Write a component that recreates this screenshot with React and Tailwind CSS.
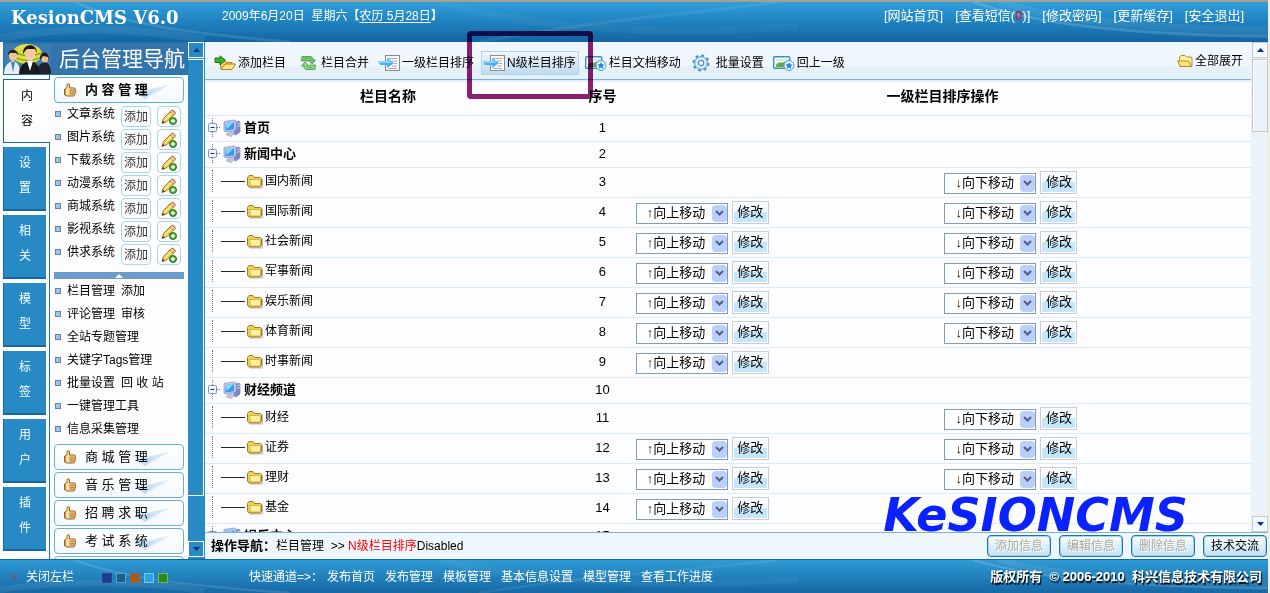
import { useState } from "react"
import clsx from "clsx"

const TABS = ["内容", "设置", "相关", "模型", "标签", "用户", "插件"]

const SYSTEMS = ["文章系统", "图片系统", "下载系统", "动漫系统", "商城系统", "影视系统", "供求系统"]

const MANAGE_LINKS = [
  ["栏目管理", "添加"],
  ["评论管理", "审核"],
  ["全站专题管理"],
  ["关键字Tags管理"],
  ["批量设置", "回 收 站"],
  ["一键管理工具"],
  ["信息采集管理"],
]

const SECTIONS = ["商 城 管 理", "音 乐 管 理", "招 聘 求 职", "考 试 系 统", "采 集 管 理"]

const ROWS = [
  { id: 1, name: "首页", root: true },
  { id: 2, name: "新闻中心", root: true },
  { id: 3, name: "国内新闻", down: true },
  { id: 4, name: "国际新闻", up: true, down: true },
  { id: 5, name: "社会新闻", up: true, down: true },
  { id: 6, name: "军事新闻", up: true, down: true },
  { id: 7, name: "娱乐新闻", up: true, down: true },
  { id: 8, name: "体育新闻", up: true, down: true },
  { id: 9, name: "时事新闻", up: true },
  { id: 10, name: "财经频道", root: true },
  { id: 11, name: "财经", down: true },
  { id: 12, name: "证券", up: true, down: true },
  { id: 13, name: "理财", up: true, down: true },
  { id: 14, name: "基金", up: true },
  { id: 15, name: "娱乐中心", root: true },
]

const SKINS = [
  { name: "深蓝", className: "bg-[#1c3a8e] border-[#3b3f9c]" },
  { name: "青蓝", className: "bg-[#1b6187] border-[#4fa3c8]" },
  { name: "棕色", className: "bg-[#a85a14] border-[#8a6a52]" },
  { name: "天蓝", className: "bg-[#2aa3e6] border-[#7cc8ee]" },
  { name: "绿色", className: "bg-[#2f8a1e] border-[#6db36b]" },
]

const Swirl = () => (
  <svg className="absolute inset-0 w-full h-full" viewBox="0 0 1270 42" preserveAspectRatio="none" aria-hidden="true">
    <g fill="none" stroke="#ffffff">
      <path d="M0 38C60 26 140 26 205 40" strokeOpacity=".07" strokeWidth="8" />
      <path d="M75 0C120 22 180 32 290 42" strokeOpacity=".12" strokeWidth="3" />
      <path d="M440 0C520 26 640 36 800 26" strokeOpacity=".04" strokeWidth="8" />
      <path d="M480 42C600 18 700 12 780 0" strokeOpacity=".08" strokeWidth="3" />
      <path d="M975 0C1040 24 1130 34 1270 36" strokeOpacity=".16" strokeWidth="3" />
      <path d="M1000 0C1060 20 1150 28 1270 30" strokeOpacity=".07" strokeWidth="8" />
    </g>
  </svg>
)

const TeamPicture = () => (
  <svg className="w-[47px] h-[30px] shrink-0" viewBox="0 0 47 30" aria-hidden="true">
    <rect width="47" height="30" fill="#3a7db5" />
    <ellipse cx="23" cy="10" rx="15" ry="10" fill="#e5dc3c" />
    <path d="M10 8c8 4 18 5 27 1M12 14c7 3 16 3 24 0" stroke="#7fae3a" strokeWidth="1.5" fill="none" />
    <path d="M0 30c0-8 4-12 9-13 5 1 7 5 7 13z" fill="#e6edf5" />
    <path d="M7 18l2 10 2-10z" fill="#4a7cb0" />
    <ellipse cx="9" cy="12" rx="4" ry="5" fill="#f0c39a" />
    <path d="M4 11c0-7 10-7 10 0l-2-2H6z" fill="#2c2320" />
    <path d="M33 30c0-8 3-11 8-12 4 1 6 4 6 12z" fill="#1f2430" />
    <ellipse cx="41" cy="14" rx="3.5" ry="4.5" fill="#eeba92" />
    <path d="M36 16c-1-10 10-10 9 1l-1-4-5-1z" fill="#251a18" />
    <path d="M15 30c0-8 5-12 11-13 6 1 10 5 10 13z" fill="#17191f" />
    <path d="M23 17l3 10 3-10z" fill="#fff" />
    <ellipse cx="26" cy="10" rx="5" ry="7" fill="#f5caa4" />
    <path d="M19 10C18-1 33-2 33 9l-2-4-8 0-2 2z" fill="#1d1514" />
  </svg>
)

const ThumbIcon = () => (
  <svg className="w-3.5 h-3.5 shrink-0" viewBox="0 0 14 14" aria-hidden="true">
    <path
      d="M2 6L4 4.5V2C4 .3 6.500.3 6.500 2V5h4.500c2 0 2 2 1 2.200 1 .3 1 1.800 0 2 .8.400.6 1.700-.4 1.800.3 1.500-.6 2-1.600 2H4L2 12z"
      fill="#fbdca4"
      stroke="#9c5f16"
    />
    <path d="M6.500 7.200H12M6.500 9.200H12M6.500 11h5" stroke="#9c5f16" strokeWidth=".9" />
    <path d="M1.500 6v6" stroke="#9c5f16" />
  </svg>
)

const PencilAddIcon = () => (
  <svg className="w-4 h-4" viewBox="0 0 16 16" aria-hidden="true">
    <path d="M1 14.500L2.500 9.500 10.500 1.500c1.200-1.200 4.500 1.500 3.500 3L6 12.500z" fill="#f7d55a" stroke="#9a7424" />
    <path d="M9 3l3.500 3.500L14 4.500C14.500 3 12 .8 10.500 1.500z" fill="#f3bfa0" stroke="#9a7424" strokeWidth=".7" />
    <path d="M1 14.500l.8-2.800 2 2z" fill="#4a3a18" />
    <path d="M4 11l6.500-6.500" stroke="#fff3b8" />
    <circle cx="12" cy="12" r="3.500" fill="#4fae36" stroke="#27761a" />
    <path d="M12 10v4M10 12h4" stroke="#fff" strokeWidth="1.300" />
  </svg>
)

const FolderIcon = () => (
  <svg className="w-4 h-4 shrink-0" viewBox="0 0 16 16" aria-hidden="true">
    <path d="M3 15h12.500V6" stroke="#8a8f98" fill="none" opacity=".6" />
    <path d="M.5 4.500L2 2.500h4l1.500 2h6l1 1v7l-1.500 1.500H2L.5 12z" fill="#f0cf5c" stroke="#a87b14" />
    <path d="M2.500 6.500H12L13.500 8v5h-10z" fill="#fff2a0" stroke="#c89a28" strokeWidth=".7" />
  </svg>
)

const OpenFolderIcon = () => (
  <svg className="w-4 h-4 shrink-0" viewBox="0 0 16 16" aria-hidden="true">
    <path d="M2.500 13V4L4 2.500h4L9.500 4H14l1 1v8z" fill="#fff0a8" stroke="#b88a20" />
    <path d="M.5 8h11l3 5.500h-11z" fill="#ffe67c" stroke="#b88a20" />
  </svg>
)

const ComputerIcon = () => (
  <svg className="w-[18px] h-[18px] shrink-0" viewBox="0 0 18 18" aria-hidden="true">
    <path d="M11 4l4-2 2 1v10l-4 3-2-1z" fill="#7b86c4" stroke="#7d86ba" strokeWidth=".7" />
    <path d="M14 5l3-1M14 7.500l3-1" stroke="#cfd6f2" />
    <path d="M1 2.500L11 1l2 1v9L3 13l-2-1z" fill="#c3cce8" stroke="#8d98c4" strokeWidth=".8" />
    <path d="M2.500 4L11 2.800v7.400L2.500 11.500z" fill="#2f9cf0" />
    <path d="M2.500 4L11 2.800 4 10z" fill="#8fd2ff" />
    <path d="M3 15.500l5-3 4 1.500-4 3.500z" fill="#c3c8dc" stroke="#868db0" strokeWidth=".6" />
  </svg>
)

const AddFolderIcon = () => (
  <svg className="w-[22px] h-4 shrink-0" viewBox="0 0 22 16" aria-hidden="true">
    <path d="M7 14l-1-8h5l1.500 1.500H18V14z" fill="#f6cf57" stroke="#b3801a" />
    <path d="M7 14.500l4-5.500h10.500L18 14.500z" fill="#ffe68a" stroke="#b3801a" />
    <path d="M1 3h5V.8l5.500 4.500L6 9.800V7.500H1z" fill="#3fae2a" stroke="#1f7a16" />
  </svg>
)

const MergeIcon = () => (
  <svg className="w-6 h-4 shrink-0" viewBox="0 0 24 16" aria-hidden="true">
    <path d="M7 1.500h8c2 0 3 1.500 3 3.500h2.500L17 9l-4-4h2c0-1-.5-1.500-1.500-1.500H11L13 6H6.500z" fill="#6fc668" stroke="#3e9a3a" strokeWidth=".8" />
    <path d="M20 14.500h-8c-2 0-3-1.500-3-3.500H6.500L10 7l4 4h-2c0 1 .5 1.500 1.500 1.500H16L14.500 10h6z" fill="#8fd587" stroke="#3e9a3a" strokeWidth=".8" />
  </svg>
)

const SortIcon = () => (
  <svg className="w-[22px] h-4 shrink-0" viewBox="0 0 22 16" aria-hidden="true">
    <rect x="7.500" y=".5" width="14" height="15" fill="#fbfbfb" stroke="#8c8c8c" />
    <path d="M10 3.500h9M14 6h5M16 8.500h3M14 11h5M10 13.500h9" stroke="#a7adb8" />
    <path d="M0 6h9V3l7 5-7 5v-3H2z" fill="#45b0ee" />
    <path d="M0 6h9l1-1 4 3H1z" fill="#8cd3fa" />
  </svg>
)

const PictureStarIcon = ({ className }) => (
  <svg className={clsx("h-4 shrink-0", className)} viewBox="0 0 22 16" aria-hidden="true">
    <rect x=".7" y="1.700" width="16" height="11.600" rx="1" fill="#fff" stroke="#3a8fc4" strokeWidth="1.400" />
    <path d="M3 10c3-5 6 0 11-5v7H3z" fill="#5cae3f" />
    <path d="M3 4h11v2H3z" fill="#cfeafa" />
    <circle cx="16" cy="10.500" r="5" fill="#e3f3fd" stroke="#4c9dd2" />
    <path d="M16 7l1.100 2.300 2.400.3-1.700 1.700.4 2.400-2.200-1.100-2.200 1.100.4-2.400-1.700-1.700 2.400-.3z" fill="#2b86cf" />
  </svg>
)

const GearIcon = () => (
  <svg className="w-6 h-[18px] shrink-0" viewBox="0 0 24 18" aria-hidden="true">
    <circle cx="11" cy="9" r="7.500" fill="none" stroke="#3f92c8" strokeWidth="2" strokeDasharray="2.900 2.990" />
    <circle cx="11" cy="9" r="6.300" fill="#d9effb" stroke="#4a9bd0" />
    <circle cx="11" cy="9" r="2.700" fill="#fff" stroke="#3f92c8" strokeWidth="1.200" />
  </svg>
)

const TOOLS = [
  { label: "添加栏目", icon: <AddFolderIcon /> },
  { label: "栏目合并", icon: <MergeIcon /> },
  { label: "一级栏目排序", icon: <SortIcon /> },
  { label: "N级栏目排序", icon: <SortIcon />, active: true },
  { label: "栏目文档移动", icon: <PictureStarIcon className="w-[22px]" /> },
  { label: "批量设置", icon: <GearIcon /> },
  { label: "回上一级", icon: <PictureStarIcon className="w-[22px]" /> },
]

const Header = () => (
  <header className="relative h-[42px] shrink-0 border-t-2 border-[#a5a08f] bg-gradient-to-b from-[#2f9fdb] to-[#1165a2] text-white">
    <Swirl />
    <div className="relative flex items-start pr-6">
      <h1 className="w-[222px] pl-[11px] pt-0.5 font-['DejaVu_Serif',serif] text-lg font-bold">KesionCMS V6.0</h1>
      <p className="flex-1 pt-1 text-xs leading-5">
        2009年6月20日 &nbsp;星期六【
        <a href="#lunar" className="underline underline-offset-2">农历 5月28日</a>】
      </p>
      <nav className="flex gap-3 pt-1 text-[13px] leading-5">
        <a href="#site">[网站首页]</a>
        <a href="#messages">
          [查看短信(<span className="text-[#f00]">0</span>)]
        </a>
        <a href="#password">[修改密码]</a>
        <a href="#cache">[更新缓存]</a>
        <a href="#logout">[安全退出]</a>
      </nav>
    </div>
  </header>
)

const SectionHeading = ({ children, open }) => (
  <button
    className={clsx(
      "relative flex items-center h-[26px] w-full shrink-0 rounded-sm border bg-gradient-to-b from-white to-[#f3f8fd] pl-2 gap-2 text-[13px]",
      open ? "border-[#58b4ee] font-bold" : "border-[#6ab0d2]"
    )}
  >
    <svg className="absolute right-3 top-1.5 w-10 h-4" viewBox="0 0 40 16" aria-hidden="true">
      <path d="M0 3l14 12L38 1 14 6z" fill="#c6dff3" opacity=".7" />
      <path d="M4 8l10 7 10-9z" fill="#b3d2ee" opacity=".6" />
    </svg>
    <ThumbIcon />
    <span className="relative">{children}</span>
  </button>
)

const Bullet = () => <span className="w-1.5 h-1.5 shrink-0 border border-[#6c7f9c] bg-[#9cc3f5]" />

const ScrollButton = ({ down, className }) => (
  <button
    aria-label={down ? "向下滚动" : "向上滚动"}
    className={clsx("flex h-4 w-full shrink-0 items-center justify-center border", className)}
  >
    <svg className={clsx("w-[7px] h-1", down && "rotate-180")} viewBox="0 0 7 4" aria-hidden="true">
      <path d="M3.500 0L7 4H0z" fill="#0b2f86" />
    </svg>
  </button>
)

const Sidebar = () => {
  const [tab, setTab] = useState("内容")

  return (
    <aside className="flex w-[205px] shrink-0 bg-[#fdfdff]">
      <div className="flex flex-1 min-w-0 flex-col pl-[3px]">
        <div className="flex h-[33px] shrink-0 items-center justify-between border border-[#2173ae] bg-[#3474ac] pr-0.5 text-[21px] leading-8 text-white">
          <TeamPicture />
          后台管理导航
        </div>
        <div className="flex flex-1 min-h-0 overflow-hidden">
          <div className="flex w-[47px] shrink-0 flex-col gap-1 border-r border-[#2173ae] pt-1">
            {TABS.map((name) => (
              <button
                key={name}
                onClick={() => setTab(name)}
                className={clsx(
                  "flex h-16 shrink-0 flex-col items-center justify-center border-[#1668a5] pb-1 text-xs leading-[25px]",
                  tab === name
                    ? "relative -mr-px border-y border-l bg-[#fdfdff] text-black"
                    : "mr-[3px] border-b-2 border-l bg-[#278ac4] text-white"
                )}
              >
                <span>{name[0]}</span>
                <span>{name[1]}</span>
              </button>
            ))}
          </div>

          <div className="flex flex-1 min-w-0 flex-col pl-1 pr-1 pt-0.5">
            <SectionHeading open>内 容 管 理</SectionHeading>
            <ul className="mt-0.5">
              {SYSTEMS.map((name) => (
                <li key={name} className="flex h-[23px] items-center">
                  <a href="#system" className="flex flex-1 items-center gap-1.5 self-start pl-px leading-[18px]">
                    <Bullet />
                    {name}
                  </a>
                  <button className="h-[21px] w-[30px] rounded-sm border border-[#a9d5f5] bg-[#fdfdff] text-[#333]">添加</button>
                  <button
                    aria-label={`编辑${name}`}
                    className="ml-1.5 mr-[3px] flex h-[21px] w-6 items-center justify-center rounded-sm border border-[#a9d5f5] bg-[#fdfdff]"
                  >
                    <PencilAddIcon />
                  </button>
                </li>
              ))}
            </ul>
            <button aria-label="收起" className="mt-1.5 flex h-[7px] shrink-0 items-center justify-center bg-[#6b9bcb]">
              <svg className="w-2 h-1" viewBox="0 0 8 4" aria-hidden="true">
                <path d="M4 0l4 4H0z" fill="#fff" />
              </svg>
            </button>
            <ul>
              {MANAGE_LINKS.map((links) => (
                <li key={links[0]} className="flex h-[23px] items-center gap-1.5 pl-px">
                  <Bullet />
                  {links.map((link) => (
                    <a key={link} href="#manage">{link}</a>
                  ))}
                </li>
              ))}
            </ul>
            <div className="flex flex-col gap-0.5 pt-1">
              {SECTIONS.map((name) => (
                <SectionHeading key={name}>{name}</SectionHeading>
              ))}
            </div>
          </div>
        </div>
      </div>

      <div className="flex w-[17px] shrink-0 flex-col border-r border-[#278ac4] bg-[#278ac4]">
        <ScrollButton className="border-white bg-[#278ac4]" />
        <div className="mt-px flex-1 border-r border-t border-white" />
        <div className="h-[46px] border-t border-white" />
        <ScrollButton down className="mb-0.5 border-white bg-[#278ac4]" />
      </div>
    </aside>
  )
}

const MoveControl = ({ direction, name }) => {
  const up = direction === "up"
  return (
    <div className="flex items-end gap-1 py-[3px] pl-0.5">
      <div className="relative">
        <select
          aria-label={`${name}${up ? "向上移动" : "向下移动"}`}
          className="block h-[21px] w-[92px] appearance-none border border-[#7f9db9] bg-white pl-2.5 text-[13px] leading-4"
        >
          <option>{up ? "↑向上移动" : "↓向下移动"}</option>
        </select>
        <span className="pointer-events-none absolute right-px top-0.5 flex h-[17px] w-[15px] items-center justify-center rounded-sm bg-[#bacffb]">
          <svg className="w-[9px] h-1.5" viewBox="0 0 9 6" aria-hidden="true">
            <path d="M1 1l3.500 3.500L8 1" fill="none" stroke="#4d6185" strokeWidth="2" />
          </svg>
        </span>
      </div>
      <button className="h-[23px] w-[37px] border border-[#cccccc] bg-gradient-to-b from-[#f4fafe] from-50% to-[#c4e6fa] to-50% pb-0.5 text-[13px] leading-5 shadow-[inset_0_0_0_1px_#ffffff]">
        修改
      </button>
    </div>
  )
}

const CategoryRow = ({ row }) => (
  <tr className={clsx("border-b border-[#dcebfa]", row.root ? "h-[26px]" : "h-[30px]")}>
    <td className="p-0">
      {row.root ? (
        <div className="flex items-center pl-[3px] pb-px">
          <svg className="w-3 h-5 shrink-0" viewBox="0 0 12 20" aria-hidden="true">
            <path d="M4.500 0v20M9 9.500h3" stroke="#777" strokeDasharray="1 1" />
            <rect x=".5" y="5.500" width="8" height="8" rx="1" fill="#f1f4fb" stroke="#7b93bd" />
            <path d="M2.500 9.500h4" stroke="#1c2f66" />
          </svg>
          <span className="mx-[3px] flex">
            <ComputerIcon />
          </span>
          <b className="text-[13px] leading-5">{row.name}</b>
        </div>
      ) : (
        <div className="flex items-center pl-[7px] pb-0.5">
          <span className="h-[22px] border-l border-dotted border-[#777]" />
          <span className="pl-2">——</span>
          <span className="mx-0.5 flex">
            <FolderIcon />
          </span>
          {row.name}
        </div>
      )}
    </td>
    <td className="p-0 text-center text-[13px]">{row.id}</td>
    <td className="p-0">{row.up && <MoveControl direction="up" name={row.name} />}</td>
    <td className="p-0">{row.down && <MoveControl direction="down" name={row.name} />}</td>
  </tr>
)

const Toolbar = () => (
  <div className="flex h-[38px] shrink-0 items-center gap-1 border-b border-[#7fb2cf] bg-gradient-to-b from-[#eff6fd] from-65% to-[#e4f1f9] to-65% pl-[7px] pr-2 pt-1">
    {TOOLS.map((tool) => (
      <div key={tool.label} className="relative">
        <button
          className={clsx(
            "flex h-6 items-center gap-0.5 border pl-px pr-0.5 whitespace-nowrap",
            tool.active ? "border-[#b0d5f0] bg-gradient-to-b from-[#f0f7fd] to-[#bfdaef]" : "border-transparent"
          )}
        >
          {tool.icon}
          {tool.label}
        </button>
        {tool.active && (
          <span className="pointer-events-none absolute -left-3.5 -right-3.5 -top-5 -bottom-6 z-10 rounded-sm border-5 border-[#8b2071] mix-blend-multiply" />
        )}
      </div>
    ))}
    <a href="#expand" className="ml-auto flex items-center gap-0.5 pb-1 whitespace-nowrap">
      <OpenFolderIcon />
      全部展开
    </a>
  </div>
)

const StatusBar = () => (
  <div className="flex h-[27px] shrink-0 items-center border-t border-[#7fb2cf] bg-[#eff6fc] pl-1.5 pr-px">
    <p className="flex-1 leading-5">
      <b className="text-[13px]">操作导航：</b>栏目管理 &nbsp;&gt;&gt; <span className="text-[#f00]">N级栏目排序</span>Disabled
    </p>
    <div className="flex gap-2">
      {["添加信息", "编辑信息", "删除信息", "技术交流"].map((label, i) => (
        <button
          key={label}
          disabled={i < 3}
          className="h-[22px] w-16 rounded-sm border border-[#1c75b0] bg-gradient-to-b from-[#fafdff] to-[#bfe1f5] shadow-[inset_0_0_0_1px_#a8d4ee] disabled:text-[#aca899] disabled:[text-shadow:1px_1px_0_#fff]"
        >
          {label}
        </button>
      ))}
    </div>
  </div>
)

const Footer = () => (
  <footer className="relative h-[34px] shrink-0 border-t border-[#1168a5] bg-gradient-to-b from-[#2f9bd6] to-[#1568a4] text-white">
    <Swirl />
    <div className="relative flex h-full items-center">
      <button className="flex w-[102px] items-center gap-2 pl-2.5">
        <svg className="w-2 h-2" viewBox="0 0 8 8" aria-hidden="true">
          <path d="M1 1l6 6M7 1L1 7" stroke="#b8303c" />
        </svg>
        关闭左栏
      </button>
      <div className="flex w-[147px] gap-1 pt-0.5">
        {SKINS.map((skin) => (
          <button key={skin.name} aria-label={skin.name} className={clsx("h-2.5 w-2.5 border", skin.className)} />
        ))}
      </div>
      <div className="flex flex-1 gap-1">
        <span>快速通道=&gt;：</span>
        <nav className="flex gap-2.5">
          {["发布首页", "发布管理", "模板管理", "基本信息设置", "模型管理", "查看工作进度"].map((link) => (
            <a key={link} href="#quick">{link}</a>
          ))}
        </nav>
      </div>
      <p className="pr-1.5 text-[13px] font-bold [text-shadow:1px_2px_1px_#000]">
        版权所有 &nbsp;© 2006-2010 &nbsp;科兴信息技术有限公司
      </p>
    </div>
  </footer>
)

const App = () => (
  <div className="flex h-screen flex-col overflow-hidden bg-[#f3ecd9] pr-0.5 font-['Liberation_Sans','Noto_Sans_CJK_SC',sans-serif] text-xs text-black">
    <Header />
    <div className="flex flex-1 min-h-0">
      <Sidebar />
      <main className="relative flex flex-1 min-w-0 flex-col bg-[#fdfdff]">
        <div className="flex flex-1 min-h-0">
          <div className="flex flex-1 min-w-0 flex-col">
            <Toolbar />
            <div className="flex-1 min-h-0 overflow-hidden border-t-2 border-[#e3effa]">
              <table className="w-full table-fixed border-collapse">
                <colgroup>
                  <col className="w-[35%]" />
                  <col className="w-[6%]" />
                  <col />
                  <col />
                </colgroup>
                <thead>
                  <tr className="h-[33px] border-b border-[#dcebfa] text-sm">
                    <th className="p-0 pb-1">栏目名称</th>
                    <th className="p-0 pb-1">序号</th>
                    <th colSpan={2} className="p-0 pb-1">一级栏目排序操作</th>
                  </tr>
                </thead>
                <tbody>
                  {ROWS.map((row) => (
                    <CategoryRow key={row.id} row={row} />
                  ))}
                </tbody>
              </table>
            </div>
          </div>
          <div className="flex w-[17px] shrink-0 flex-col bg-[#eaf2fb] pl-px">
            <ScrollButton className="border-[#c8ccd2] bg-[#f3f8fd]" />
            <div className="mt-px h-[73px] border border-[#c8c8c8] bg-[#eaf2fb] shadow-[inset_1px_1px_0_#ffffff]" />
            <div className="flex-1" />
            <ScrollButton down className="border-[#c8ccd2] bg-[#f3f8fd]" />
          </div>
        </div>
        <StatusBar />
        {/* product logo floats over the bottom corner of the list */}
        <div className="pointer-events-none absolute bottom-6 right-20 font-['DejaVu_Sans',sans-serif] text-[46px] leading-10 font-bold italic text-[#0a22ff]">
          KeSIONCMS
        </div>
      </main>
    </div>
    <Footer />
  </div>
)

export default App
